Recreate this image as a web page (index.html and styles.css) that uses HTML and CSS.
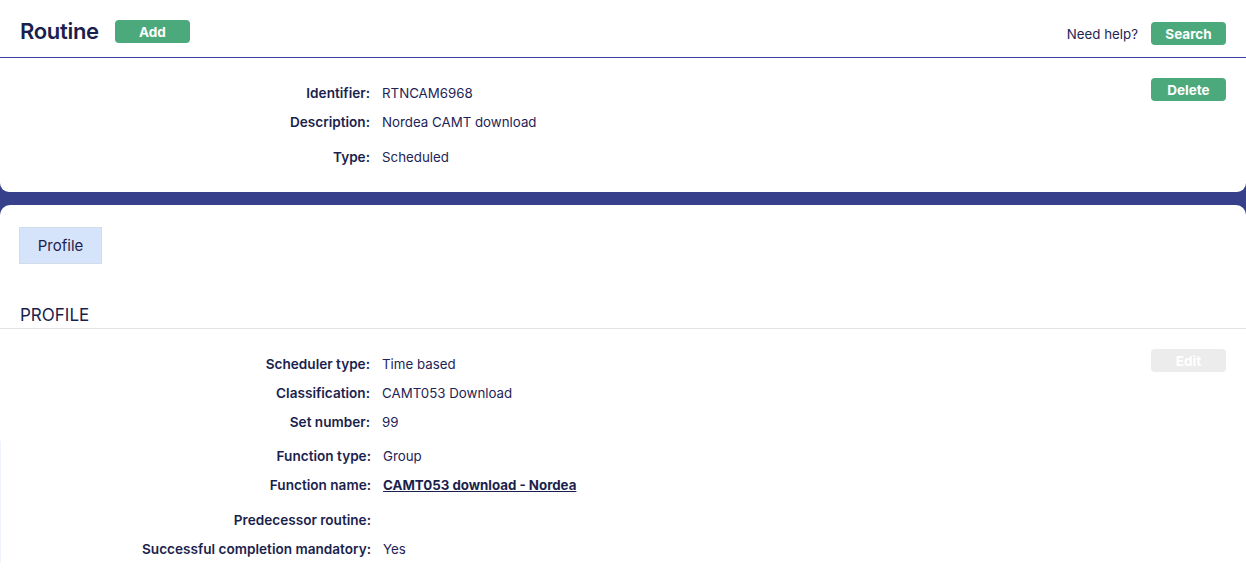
FILE: index.html
```html
<!DOCTYPE html>
<html lang="en">
<head>
    <meta charset="UTF-8">
    <meta name="viewport" content="width=device-width, initial-scale=1.0">
    <title>Routine</title>
    <link rel="stylesheet" href="styles.css">
</head>
<body>
    <header class="page-header">
        <div class="title-group">
            <h1>Routine</h1>
            <button class="btn">Add</button>
        </div>
        <div class="help-group">
            <span class="help-text">Need help?</span>
            <button class="btn btn-search">Search</button>
        </div>
    </header>

    <section class="card card-top">
        <div class="details">
            <div class="row"><span class="label">Identifier:</span><span class="value">RTNCAM6968</span></div>
            <div class="row"><span class="label">Description:</span><span class="value">Nordea CAMT download</span></div>
            <div class="row spaced"><span class="label">Type:</span><span class="value">Scheduled</span></div>
        </div>
        <button class="btn btn-side">Delete</button>
    </section>

    <section class="card card-bottom">
        <div class="tabs">
            <button class="tab active">Profile</button>
        </div>

        <h2 class="section-title">PROFILE</h2>

        <div class="section-body">
            <div class="details">
                <div class="row"><span class="label">Scheduler type:</span><span class="value">Time based</span></div>
                <div class="row"><span class="label">Classification:</span><span class="value">CAMT053 Download</span></div>
                <div class="row"><span class="label">Set number:</span><span class="value">99</span></div>
            </div>
            <button class="btn btn-side" disabled>Edit</button>
        </div>

        <div class="details group">
            <div class="row"><span class="label">Function type:</span><span class="value">Group</span></div>
            <div class="row"><span class="label">Function name:</span><a class="value link" href="#">CAMT053 download - Nordea</a></div>
            <div class="row spaced"><span class="label">Predecessor routine:</span><span class="value"></span></div>
            <div class="row"><span class="label">Successful completion mandatory:</span><span class="value">Yes</span></div>
        </div>
    </section>
</body>
</html>
```

FILE: styles.css
```css
body {
    margin: 0;
    font-family: Inter, "Noto Sans", sans-serif;
    color: #1b1f4d;
    background-color: #37418b;
}
.page-header {
    display: flex;
    justify-content: space-between;
    align-items: flex-start;
    height: 57px;
    padding: 0 20px;
    background: #ffffff;
    border-bottom: 1px solid #3a449e;
}
.title-group {
    display: flex;
    align-items: center;
    gap: 16px;
    margin-top: 20px;
}
h1 {
    margin: 0;
    font-size: 22px;
    font-weight: 600;
    line-height: 23px;
    letter-spacing: -0.3px;
}
.help-group {
    display: flex;
    align-items: center;
    gap: 13px;
    margin-top: 22px;
}
.help-text {
    font-size: 13.3px;
    color: #1e2456;
}
.btn {
    width: 75px;
    height: 23px;
    padding: 0;
    border: none;
    border-radius: 4px;
    background-color: #4ba97b;
    color: #ffffff;
    font-family: inherit;
    font-size: 13.5px;
    font-weight: 700;
    cursor: pointer;
}
.btn:disabled {
    background-color: #ececec;
    cursor: default;
}
.card {
    background: #ffffff;
}
.card-top {
    display: flex;
    justify-content: space-between;
    align-items: flex-start;
    padding: 20px 20px 21px;
    border-radius: 0 0 9px 9px;
}
.card-bottom {
    margin-top: 13px;
    padding-top: 22px;
    min-height: 400px;
    border-radius: 10px 10px 0 0;
}
.details {
    display: flex;
    flex-direction: column;
}
.row {
    display: grid;
    grid-template-columns: 350px 1fr;
    column-gap: 12px;
    height: 29px;
    align-items: center;
    font-size: 13.3px;
}
.row.spaced {
    margin-top: 6px;
}
.label {
    font-size: 13.6px;
    font-weight: 600;
    text-align: right;
}
.value {
    color: #1e2456;
}
.link {
    font-weight: 700;
    color: #1b1f4d;
    text-decoration: underline;
}
.tabs {
    padding: 0 19px;
}
.tab {
    width: 83px;
    height: 37px;
    padding: 0;
    border: 1px solid #d3dcea;
    background-color: #d6e4fb;
    color: #1b1f4d;
    font-family: inherit;
    font-size: 15px;
}
.section-title {
    margin: 40px 0 0;
    padding: 0 20px 2px;
    font-size: 17px;
    font-weight: 400;
    line-height: 22px;
    border-bottom: 1px solid #e2e2e2;
}
.section-body {
    display: flex;
    justify-content: space-between;
    align-items: flex-start;
    padding: 20px 20px 0;
}
.group {
    margin-top: 5px;
    padding-left: 20px;
    border-left: 1px solid #eef3fc;
}
```
